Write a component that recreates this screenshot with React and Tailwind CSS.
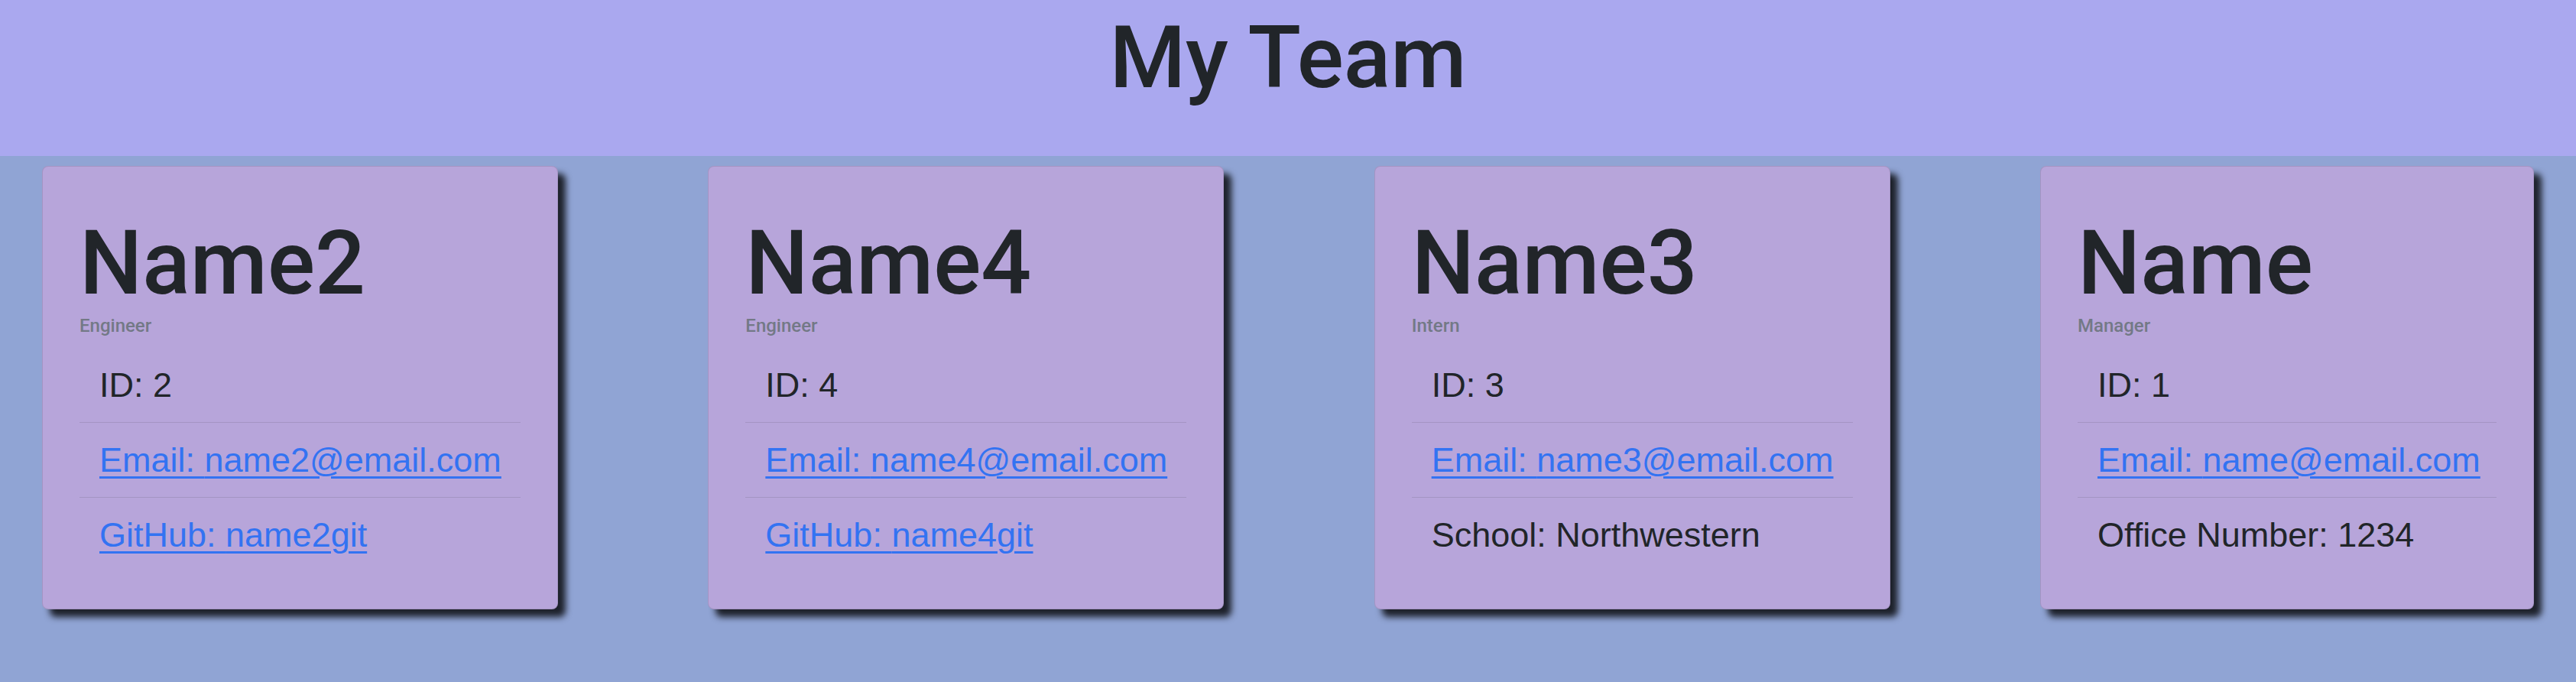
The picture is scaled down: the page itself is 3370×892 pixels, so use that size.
const team = [
  { name: 'Name2', role: 'Engineer', id: 2, email: 'name2@email.com', github: 'name2git', wide: true },
  { name: 'Name4', role: 'Engineer', id: 4, email: 'name4@email.com', github: 'name4git', wide: true },
  { name: 'Name3', role: 'Intern', id: 3, email: 'name3@email.com', school: 'Northwestern', wide: true },
  { name: 'Name', role: 'Manager', id: 1, email: 'name@email.com', office: '1234', wide: false },
];

const EmployeeCard = ({ member }) => {
  return (
    <div
      className={`${member.wide ? 'w-[675px]' : 'w-[646px]'} rounded-[8px] border border-black/10 bg-[#b7a5da] p-[48px] shadow-[10px_10px_8px_rgba(0,0,0,0.8)]`}
    >
      <h2 className="mt-[11px] font-['Roboto',sans-serif] text-[116px] font-medium leading-[1.16] text-[#212529] whitespace-nowrap">
        {member.name}
      </h2>
      <h6 className="mb-[15px] font-['Roboto',sans-serif] text-[24px] font-medium leading-[28px] text-[#737986]">
        {member.role}
      </h6>
      <ul className="divide-y divide-black/10 text-[45px] leading-[69px] text-[#212529]">
        <li className="px-[26px] py-[14px] whitespace-nowrap">ID: {member.id}</li>
        <li className="px-[26px] py-[14px] whitespace-nowrap">
          <a href={`mailto:${member.email}`} className="text-[#3373f2] underline decoration-[3px] underline-offset-[6px]">
            Email: {member.email}
          </a>
        </li>
        {member.github && (
          <li className="px-[26px] py-[14px] whitespace-nowrap">
            <a href={`https://github.com/${member.github}`} className="text-[#3373f2] underline decoration-[3px] underline-offset-[6px]">
              GitHub: {member.github}
            </a>
          </li>
        )}
        {member.school && (
          <li className="px-[26px] py-[14px] whitespace-nowrap">School: {member.school}</li>
        )}
        {member.office && (
          <li className="px-[26px] py-[14px] whitespace-nowrap">Office Number: {member.office}</li>
        )}
      </ul>
    </div>
  );
};

export default function App() {
  return (
    <div className="min-h-screen bg-[#90a4d4] font-['Liberation_Sans',Arial,sans-serif]">
      <header className="h-[204px] bg-[#aaa8ef] pt-[9px] text-center">
        <h1 className="font-['Roboto',sans-serif] text-[114px] font-medium leading-[1.16] text-[#212529]">My Team</h1>
      </header>
      <main className="flex items-start justify-between px-[55px] pt-[13px]">
        {team.map((member) => (
          <EmployeeCard key={member.id} member={member} />
        ))}
      </main>
    </div>
  );
}
